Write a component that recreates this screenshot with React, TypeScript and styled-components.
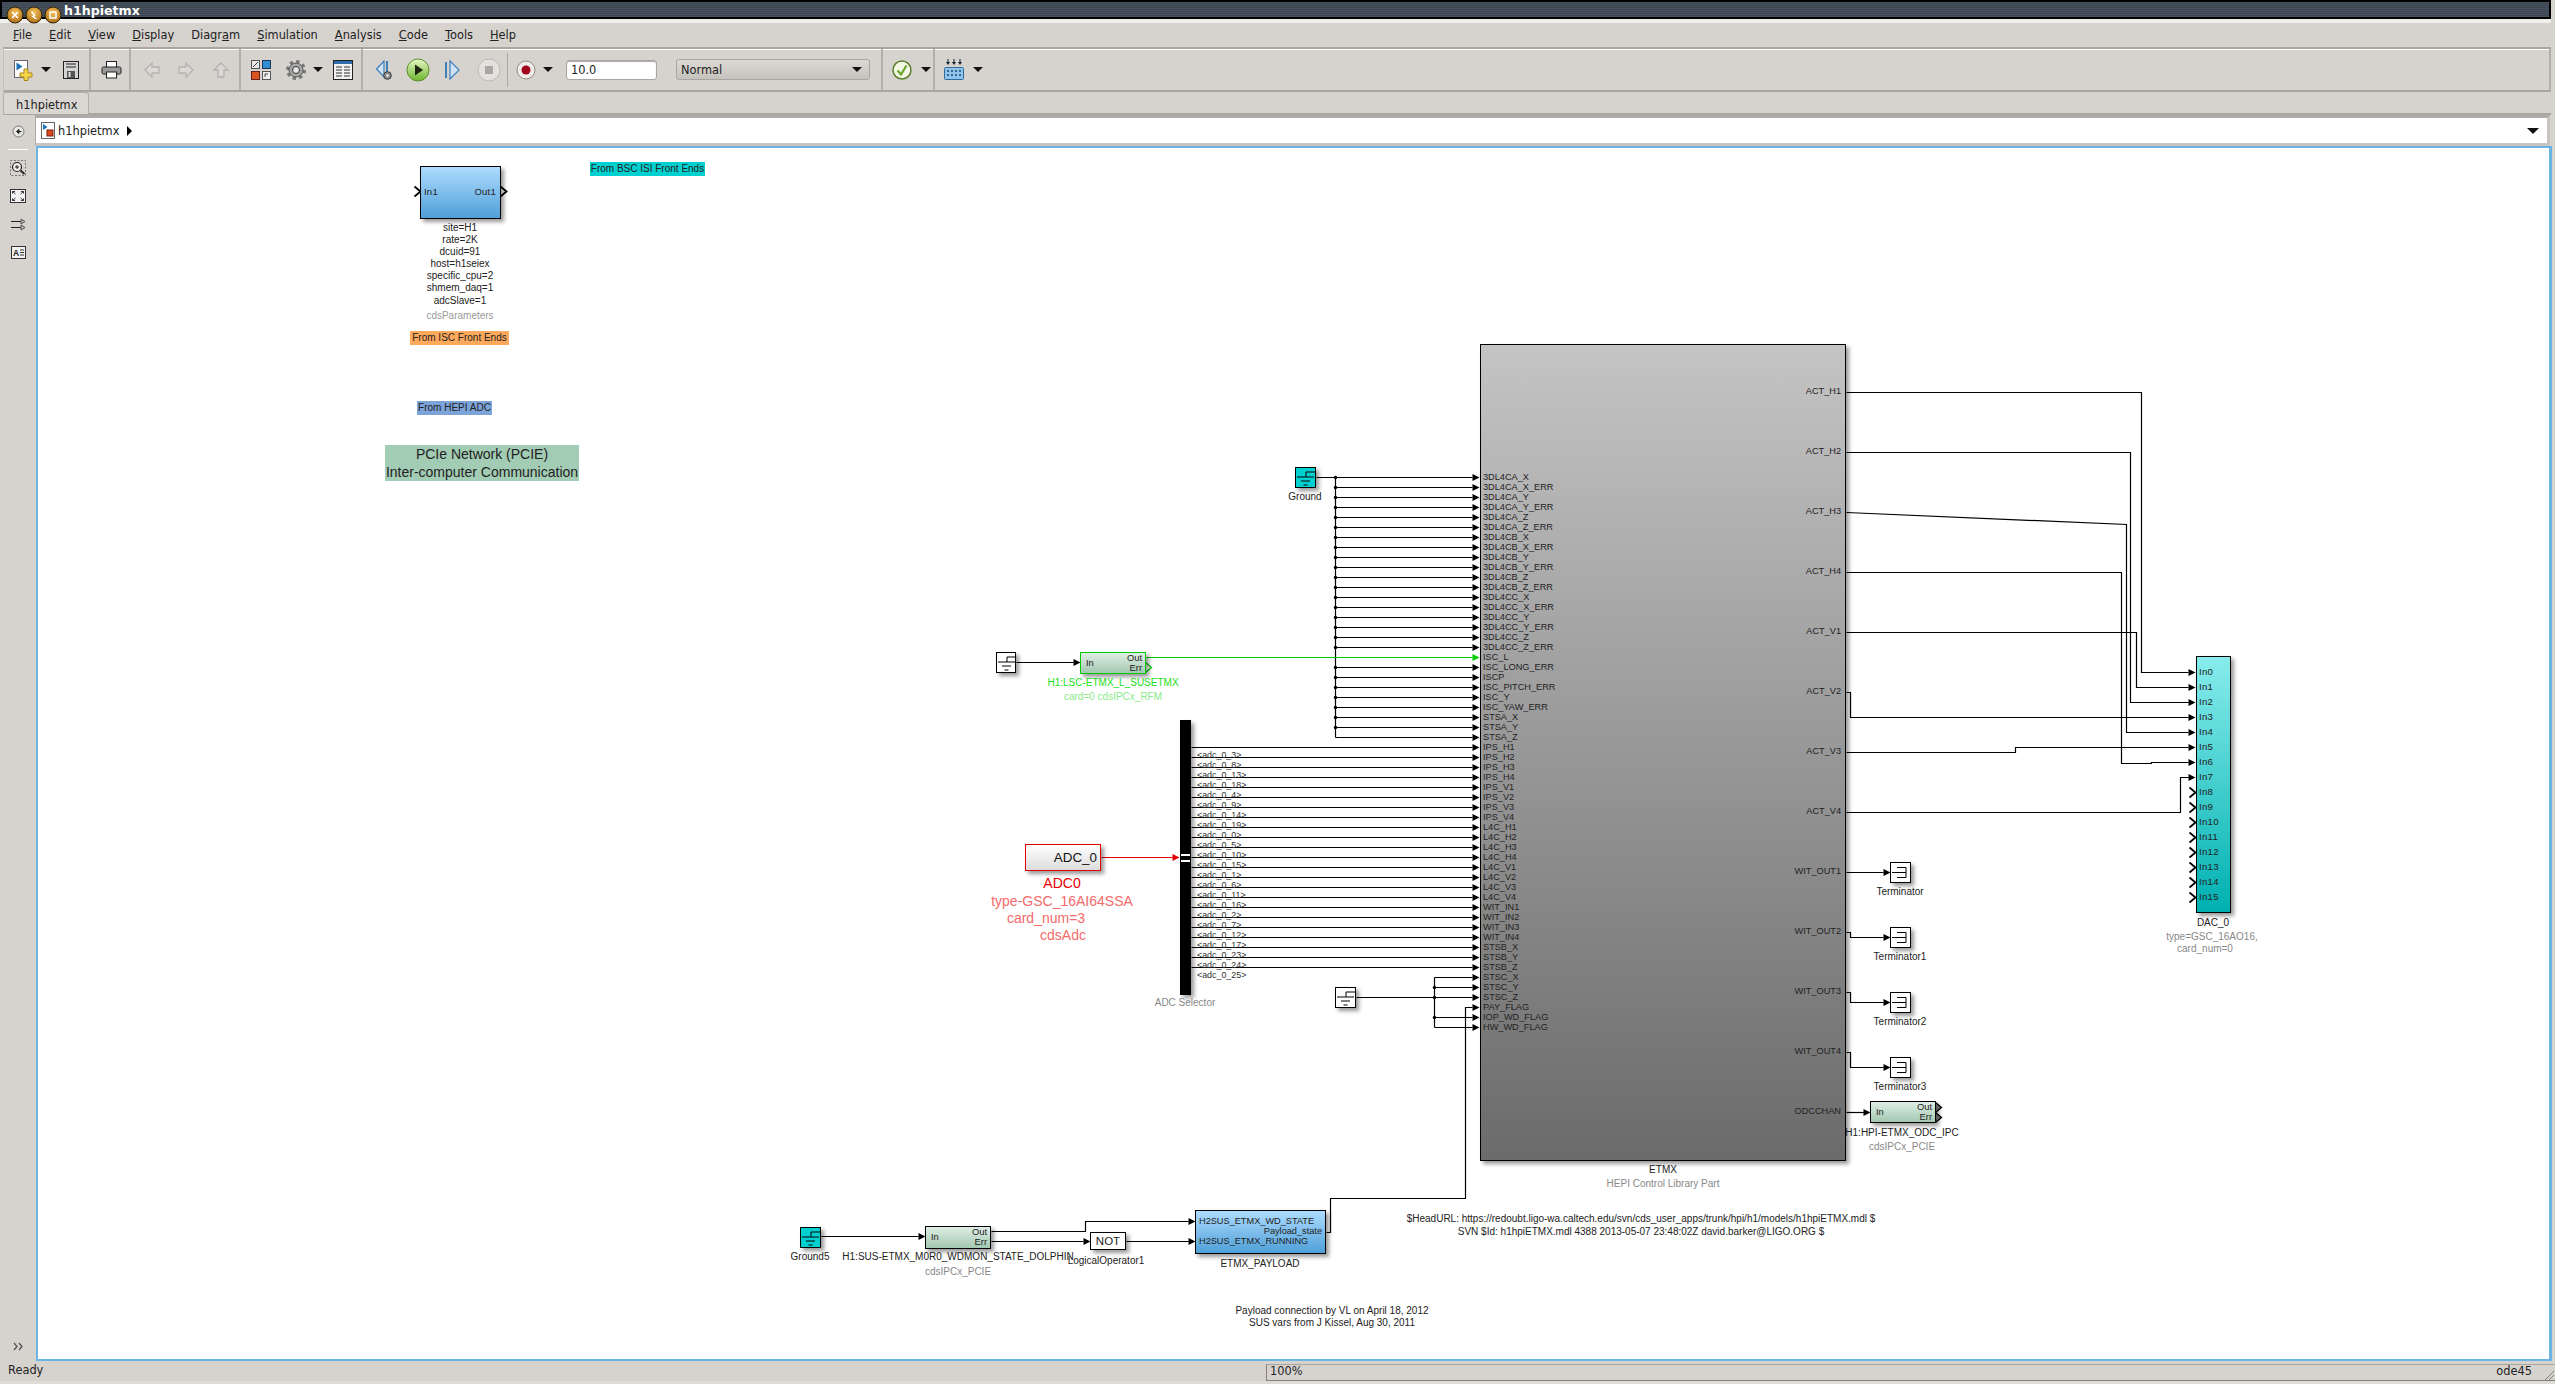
import React from "react";
import styled, { createGlobalStyle } from "styled-components";

const OX = 38;
const OY = 148;
const rowY = (i: number) => 477 + i * 10;

const Global = createGlobalStyle`
  html, body { margin: 0; padding: 0; background: #d6d3cf; }
  * { box-sizing: border-box; }
`;

const Shell = styled.div`
  width: 2555px;
  height: 1384px;
  overflow: hidden;
  display: flex;
  flex-direction: column;
  background: #d6d3cf;
  font-family: "DejaVu Sans", sans-serif;
  font-size: 11.4px;
  color: #222;
`;

/* window chrome */
const TitleBar = styled.div`
  position: relative;
  z-index: 1;
  height: 19px;
  margin-right: 4px;
  flex: none;
  display: flex;
  align-items: flex-start;
  gap: 1px;
  padding: 4px 0 0 4px;
  border: 2px solid #000;
  background: repeating-linear-gradient(#48525f 0 1px, #3c4652 1px 2px);
`;
const TitleText = styled.span`
  color: #fff;
  font-weight: 700;
  font-size: 12.6px;
  line-height: 14px;
  margin: -2px 0 0 1px;
`;
const Strip = styled.div`
  height: 4px;
  flex: none;
  margin-right: 4px;
  background: #efeeeb;
`;
const MenuBar = styled.nav`
  height: 24px;
  flex: none;
  display: flex;
  align-items: center;
  gap: 17px;
  padding-left: 13px;
`;
const Toolbar = styled.div`
  height: 45px;
  flex: none;
  margin: 0 4px 0 3px;
  display: flex;
  border-top: 2px solid #a9a6a2;
  border-bottom: 2px solid #a9a6a2;
  border-left: 1px solid #c4c1bd;
  box-shadow: inset 0 1px 0 #fff;
`;
const ToolGroup = styled.div<{ $w?: number }>`
  display: flex;
  align-items: center;
  width: ${p => (p.$w ? `${p.$w}px` : "auto")};
  flex: ${p => (p.$w ? "none" : "1")};
  border-right: 2px solid #b3b0ac;
`;
const Tool = styled.div<{ $w: number; $mr?: number }>`
  width: ${p => p.$w}px;
  margin-right: ${p => p.$mr || 0}px;
  flex: none;
  display: flex;
  align-items: center;
  justify-content: center;
`;
const Ico = styled.svg`
  display: block;
  flex: none;
`;
const Caret = styled.span`
  display: block;
  width: 0;
  height: 0;
  border-left: 5px solid transparent;
  border-right: 5px solid transparent;
  border-top: 5px solid #111;
`;
const ThinRule = styled.span`
  width: 1px;
  height: 34px;
  background: #a9a6a2;
`;
const TimeField = styled.div`
  width: 91px;
  height: 20px;
  margin-right: 19px;
  flex: none;
  padding-left: 4px;
  line-height: 19px;
  background: #fff;
  border: 1px solid #a9a6a2;
  border-radius: 3px;
  box-shadow: inset 0 1px 1px #aaa;
`;
const ModeSelect = styled.div`
  width: 194px;
  height: 21px;
  flex: none;
  display: flex;
  align-items: center;
  justify-content: space-between;
  padding: 0 7px 0 4px;
  background: linear-gradient(#dcd9d5, #c6c3bf);
  border: 1px solid #a9a6a2;
  border-radius: 3px;
`;
const TabStrip = styled.div`
  height: 23px;
  flex: none;
  margin: 0 4px 0 3px;
  border-bottom: 2px solid #a9a6a2;
`;
const Tab = styled.div`
  width: 86px;
  height: 22px;
  padding-left: 12px;
  line-height: 25px;
  background: #dad7d3;
  border: 1px solid #b3b0ac;
  border-bottom: 0;
  border-radius: 3px 3px 0 0;
`;
const Body = styled.div`
  height: 1246px;
  flex: none;
  display: flex;
`;
const Palette = styled.aside`
  width: 36px;
  flex: none;
  display: flex;
  flex-direction: column;
  align-items: center;
  padding: 6px 0 5px;
`;
const PaletteButton = styled.div<{ $auto?: boolean }>`
  height: 20px;
  width: 24px;
  margin-top: ${p => (p.$auto ? "auto" : "8px")};
  display: flex;
  align-items: center;
  justify-content: center;
  &:first-child { margin-top: 0; }
`;
const PaletteRule = styled.div`
  width: 20px;
  height: 1px;
  margin-top: 8px;
  background: #fff;
`;
const Main = styled.div`
  flex: 1;
  min-width: 0;
  display: flex;
  flex-direction: column;
  margin-right: 3px;
`;
const Address = styled.div`
  height: 31px;
  flex: none;
  display: flex;
  align-items: center;
  gap: 2px;
  margin-right: 2px;
  padding: 1px 8px 0 4px;
  background: #fff;
  border: 3px solid #c8c5c1;
  border-top-color: #aeaba7;
  border-left: 1px solid #aeaba7;
  margin-left: -1px;
`;
const CrumbArrow = styled.span`
  width: 0;
  height: 0;
  margin-left: 6px;
  border-top: 5px solid transparent;
  border-bottom: 5px solid transparent;
  border-left: 5px solid #000;
`;
const AddressCaret = styled(Caret)`
  margin-left: auto;
  border-left-width: 6px;
  border-right-width: 6px;
  border-top-width: 6px;
`;
const Canvas = styled.div`
  position: relative;
  flex: 1;
  background: #fff;
  border: 2px solid #6cb3e6;
  border-right-width: 3px;
  overflow: hidden;
  font-family: "Liberation Sans", Arial, sans-serif;
  font-size: 9.2px;
  line-height: 10px;
  color: #222;
`;
const StatusBar = styled.footer`
  height: 23px;
  flex: none;
  display: flex;
  padding-bottom: 3px;
  box-shadow: inset 0 -3px 0 #dfdcd8;
`;
const StatusText = styled.div`
  width: 1266px;
  flex: none;
  padding-left: 8px;
  line-height: 18px;
`;
const StatusBox = styled.div`
  flex: 1;
  display: flex;
  justify-content: space-between;
  margin-top: 3px;
  padding: 0 23px 0 3px;
  line-height: 13px;
  border-top: 1px solid #a9a6a2;
  border-bottom: 1px solid #85807c;
  border-left: 1px solid #85807c;
`;
const Grip = styled.svg`
  flex: none;
  align-self: flex-end;
  margin-left: -12px;
`;

/* diagram parts */
const Wires = styled.svg`
  position: absolute;
  left: 0;
  top: 0;
`;
const Block = styled.div<{ $x: number; $y: number; $w: number; $h: number }>`
  position: absolute;
  left: ${p => p.$x - OX}px;
  top: ${p => p.$y - OY}px;
  width: ${p => p.$w}px;
  height: ${p => p.$h}px;
  border: 1px solid #000;
  box-shadow: 3px 3px 4px rgba(0, 0, 0, 0.4);
`;
const Subsystem = styled(Block)`
  display: flex;
  justify-content: space-between;
  background: linear-gradient(#c4c4c4, #6b6b6b);
`;
const InputList = styled.div`
  padding: 127px 0 0 2px;
`;
const OutputList = styled.div`
  padding: 16px 4px 0 0;
  text-align: right;
`;
const OutputRow = styled.div`
  height: 60px;
  line-height: 60px;
`;
const InputRow = styled.div`
  height: 10px;
  white-space: nowrap;
`;
const BlueBlock = styled(Block)`
  display: flex;
  background: linear-gradient(#aedcff, #4f9fd8);
`;
const SplitLabels = styled.div`
  flex: 1;
  display: flex;
  align-items: center;
  justify-content: space-between;
  padding: 0 4px 2px 3px;
  font-size: 9.6px;
  letter-spacing: 0.2px;
`;
const PayloadLabels = styled.div`
  flex: 1;
  display: flex;
  flex-direction: column;
  padding: 5px 3px 0;
`;
const RightLabel = styled.span`
  align-self: flex-end;
`;
const IpcBlock = styled(Block)<{ $green?: boolean }>`
  display: flex;
  align-items: center;
  justify-content: space-between;
  padding: 0 3px 1px 5px;
  background: linear-gradient(#dfeee5, #a3c8b1);
  border-color: ${p => (p.$green ? "#00cc00" : "#000")};
  font-size: 9.4px;
`;
const OutStack = styled.div`
  display: flex;
  flex-direction: column;
  align-items: flex-end;
`;
const AdcBlock = styled(Block)`
  display: flex;
  align-items: center;
  justify-content: flex-end;
  padding-right: 3px;
  background: linear-gradient(#fff, #dcdcdc);
  border-color: #e00000;
  font-size: 13.4px;
  color: #111;
`;
const PlainBlock = styled(Block)`
  display: flex;
  align-items: center;
  justify-content: center;
  background: #fff;
  font-size: 11.5px;
`;
const SmallBlock = styled(Block)<{ $cyan?: boolean }>`
  background: ${p => (p.$cyan ? "#00d0d0" : "#fff")};
`;
const DacBlock = styled(Block)`
  padding: 7px 0 0 2px;
  background: linear-gradient(#88ecec, #00b0b0);
  font-size: 9.6px;
  letter-spacing: 0.3px;
`;
const DacRow = styled.div`
  height: 15px;
  line-height: 15px;
`;
const Bar = styled(Block)`
  background: #000;
  border: 0;
`;
const BarPort = styled.div`
  position: absolute;
  left: 1px;
  right: 1px;
  top: 134px;
  height: 8px;
  border-top: 2px solid #fff;
  border-bottom: 2px solid #fff;
`;
const Caption = styled.div<{ $x: number; $y: number; $c?: string; $s?: number }>`
  position: absolute;
  left: ${p => p.$x - OX}px;
  top: ${p => p.$y - OY}px;
  transform: translate(-50%, -50%);
  white-space: nowrap;
  color: ${p => p.$c || "#222"};
  font-size: ${p => p.$s || 10}px;
`;
const Stack = styled.div<{ $x: number; $y: number; $lh: number; $c?: string }>`
  position: absolute;
  left: ${p => p.$x - OX}px;
  top: ${p => p.$y - OY}px;
  transform: translateX(-50%);
  text-align: center;
  white-space: nowrap;
  font-size: 10px;
  line-height: ${p => p.$lh}px;
  color: ${p => p.$c || "#222"};
`;
const AdcNames = styled.div`
  position: absolute;
  left: ${1197 - OX}px;
  top: ${750 - OY}px;
  font-size: 8.9px;
  color: #333;
  white-space: nowrap;
`;
const Banner = styled.div<{ $x: number; $y: number; $w: number; $bg: string }>`
  position: absolute;
  left: ${p => p.$x - OX}px;
  top: ${p => p.$y - OY}px;
  width: ${p => p.$w}px;
  height: 14px;
  line-height: 14px;
  text-align: center;
  white-space: nowrap;
  background: ${p => p.$bg};
  font-size: 10px;
`;
const PcieNote = styled.div`
  position: absolute;
  left: ${385 - OX}px;
  top: ${445 - OY}px;
  width: 194px;
  height: 36px;
  line-height: 18px;
  text-align: center;
  white-space: nowrap;
  background: #a3ccb5;
  font-size: 14px;
  color: #222;
`;

/* title bar buttons */
const WinButton = ({ mark }: { mark: React.ReactNode }) => (
  <Ico width="18" height="18" viewBox="0 0 18 18">
    <defs>
      <radialGradient id="orb" cx="50%" cy="35%" r="70%">
        <stop offset="0" stopColor="#f7c25c" />
        <stop offset="1" stopColor="#a8670f" />
      </radialGradient>
    </defs>
    <circle cx="9" cy="9" r="8" fill="url(#orb)" stroke="#2d2208" />
    {mark}
  </Ico>
);

/* toolbar icons */
const NewIcon = () => (
  <Ico width="22" height="22" viewBox="0 0 22 22">
    <rect x="1.5" y="1.5" width="13" height="17" fill="#fff" stroke="#667" />
    <path d="M3.5 3.5l6 4-6 4z" fill="#1b6fb5" />
    <path d="M11 10h4v4h4v4h-4v3.500h-4v-3.500h-4v-4h4z" fill="#f6d54c" stroke="#a8851a" />
  </Ico>
);
const SaveIcon = () => (
  <Ico width="18" height="20" viewBox="0 0 18 20">
    <rect x="1.500" y="1.500" width="15" height="17" fill="#d5d5d5" stroke="#222" />
    <path d="M4 4h10M4 7h10" stroke="#222" />
    <rect x="5" y="11" width="8" height="7" fill="#555" />
    <rect x="6.500" y="12" width="2" height="5" fill="#ddd" />
  </Ico>
);
const PrintIcon = () => (
  <Ico width="21" height="18" viewBox="0 0 21 18">
    <rect x="5.500" y="0.500" width="10" height="7" fill="#fff" stroke="#222" />
    <rect x="1" y="6" width="19" height="7" rx="1.500" fill="#9a9a9a" stroke="#222" />
    <rect x="5.500" y="11" width="10" height="6" fill="#fff" stroke="#222" />
  </Ico>
);
const BackIcon = ({ rot = 0 }: { rot?: number }) => (
  <Ico width="18" height="18" viewBox="0 0 18 18">
    <path
      d="M2 9l7-7v4h7v6H9v4z"
      transform={`rotate(${rot} 9 9)`}
      fill="#dbd9d5"
      stroke="#b5b2ae"
      strokeWidth="1.300"
    />
  </Ico>
);
const LibraryIcon = () => (
  <Ico width="22" height="22" viewBox="0 0 22 22">
    <rect x="1.500" y="1.500" width="8" height="8" fill="#e6e6e6" stroke="#555" />
    <path d="M3 8l5-5" stroke="#444" />
    <rect x="12.500" y="1.500" width="8" height="8" fill="#2f8fd0" stroke="#235" />
    <rect x="1.500" y="12.500" width="8" height="8" fill="#d9541e" stroke="#622" />
    <rect x="12.500" y="12.500" width="8" height="8" fill="#eee" stroke="#555" />
    <path d="M15 18v-3h3" fill="none" stroke="#444" />
  </Ico>
);
const GearIcon = () => (
  <Ico width="22" height="22" viewBox="0 0 22 22">
    <circle cx="11" cy="11" r="8.500" fill="none" stroke="#777" strokeWidth="3" strokeDasharray="3.300 3.370" />
    <circle cx="11" cy="11" r="7" fill="#a8a8a8" stroke="#555" />
    <circle cx="11" cy="11" r="3.500" fill="#e6e6e6" stroke="#333" />
  </Ico>
);
const ConfigIcon = () => (
  <Ico width="20" height="20" viewBox="0 0 20 20">
    <rect x="0.500" y="0.500" width="19" height="19" fill="#f2f2f2" stroke="#222" />
    <rect x="1" y="1" width="18" height="3" fill="#2f6ea8" />
    <path d="M3 7h6M11 7h6M3 10h6M11 10h6M3 13h6M11 13h6M3 16h6M11 16h6" stroke="#333" />
  </Ico>
);
const StepBackIcon = () => (
  <Ico width="20" height="20" viewBox="0 0 20 20">
    <path d="M9 1v16L1.500 9z" fill="#cfe3f4" stroke="#3d7fb8" strokeWidth="1.200" />
    <path d="M12 1v11" stroke="#3d7fb8" strokeWidth="2" />
    <circle cx="12.500" cy="15.500" r="3.800" fill="#8f8f8f" stroke="#333" />
    <circle cx="12.500" cy="15.500" r="1.200" fill="#eee" />
  </Ico>
);
const PlayIcon = () => (
  <Ico width="24" height="24" viewBox="0 0 24 24">
    <defs>
      <linearGradient id="go" x1="0" y1="0" x2="0" y2="1">
        <stop offset="0" stopColor="#e8f7c8" />
        <stop offset="1" stopColor="#6db52c" />
      </linearGradient>
    </defs>
    <circle cx="12" cy="12" r="11" fill="url(#go)" stroke="#5c8f2c" />
    <path d="M9 6.500l8 5.500-8 5.500z" fill="#1c2410" />
  </Ico>
);
const StepForwardIcon = () => (
  <Ico width="18" height="22" viewBox="0 0 18 22">
    <path d="M2 3v16" stroke="#3d7fb8" strokeWidth="2" />
    <path d="M6 2v18l9-9z" fill="#cfe3f4" stroke="#3d7fb8" strokeWidth="1.200" />
  </Ico>
);
const StopIcon = () => (
  <Ico width="24" height="24" viewBox="0 0 24 24">
    <circle cx="12" cy="12" r="11" fill="#e4e2de" stroke="#bdbab6" />
    <rect x="8" y="8" width="8" height="8" fill="#aaa7a3" />
  </Ico>
);
const RecordIcon = () => (
  <Ico width="20" height="20" viewBox="0 0 20 20">
    <circle cx="10" cy="10" r="9" fill="#eeece9" stroke="#8f8c88" />
    <circle cx="10" cy="10" r="4.500" fill="#a0051c" />
  </Ico>
);
const CheckIcon = () => (
  <Ico width="20" height="20" viewBox="0 0 20 20">
    <circle cx="10" cy="10" r="9" fill="#f2f6e4" stroke="#5c7f2c" strokeWidth="1.500" />
    <path d="M5.500 10.500l3.500 4 5.500-9" fill="none" stroke="#6aa52a" strokeWidth="2.200" />
  </Ico>
);
const ScopeIcon = () => (
  <Ico width="22" height="22" viewBox="0 0 22 22">
    <path d="M5 0v4M11 0v4M17 0v4" stroke="#123" />
    <path d="M3 3h4l-2 3zM9 3h4l-2 3zM15 3h4l-2 3z" fill="#123" />
    <rect x="1.500" y="8.500" width="19" height="12" rx="1" fill="#8fc3ea" stroke="#2e6c9e" />
    <path d="M4 12h2M8 12h2M12 12h2M16 12h2M4 16h2M8 16h2M12 16h2M16 16h2" stroke="#1a4a70" strokeWidth="1.500" />
  </Ico>
);
const ModelCrumbIcon = () => (
  <Ico width="16" height="18" viewBox="0 0 16 18">
    <rect x="1.500" y="0.500" width="13" height="16" fill="#fff" stroke="#666" />
    <path d="M3 2l4.500 3L3 8z" fill="#1b6fb5" />
    <rect x="7" y="8" width="6" height="6" fill="#d9481e" stroke="#7a2208" />
  </Ico>
);

/* diagram glyph inside ground and terminator boxes */
const GroundGlyph = () => (
  <Ico width="19" height="19" viewBox="0 0 19 19">
    <path d="M19 4H10v5M1 9h17M5 13h9M7.500 17h4" fill="none" stroke="#000" />
  </Ico>
);
const TerminatorGlyph = () => (
  <Ico width="19" height="19" viewBox="0 0 19 19">
    <path d="M6 4.500h9v10H6M1 9.500h14" fill="none" stroke="#000" />
  </Ico>
);

const inputNames = [
  "3DL4CA_X", "3DL4CA_X_ERR", "3DL4CA_Y", "3DL4CA_Y_ERR", "3DL4CA_Z", "3DL4CA_Z_ERR",
  "3DL4CB_X", "3DL4CB_X_ERR", "3DL4CB_Y", "3DL4CB_Y_ERR", "3DL4CB_Z", "3DL4CB_Z_ERR",
  "3DL4CC_X", "3DL4CC_X_ERR", "3DL4CC_Y", "3DL4CC_Y_ERR", "3DL4CC_Z", "3DL4CC_Z_ERR",
  "ISC_L", "ISC_LONG_ERR", "ISCP", "ISC_PITCH_ERR", "ISC_Y", "ISC_YAW_ERR",
  "STSA_X", "STSA_Y", "STSA_Z",
  "IPS_H1", "IPS_H2", "IPS_H3", "IPS_H4", "IPS_V1", "IPS_V2", "IPS_V3", "IPS_V4",
  "L4C_H1", "L4C_H2", "L4C_H3", "L4C_H4", "L4C_V1", "L4C_V2", "L4C_V3", "L4C_V4",
  "WIT_IN1", "WIT_IN2", "WIT_IN3", "WIT_IN4",
  "STSB_X", "STSB_Y", "STSB_Z", "STSC_X", "STSC_Y", "STSC_Z",
  "PAY_FLAG", "IOP_WD_FLAG", "HW_WD_FLAG",
];
const outputNames = [
  "ACT_H1", "ACT_H2", "ACT_H3", "ACT_H4", "ACT_V1", "ACT_V2", "ACT_V3", "ACT_V4",
  "WIT_OUT1", "WIT_OUT2", "WIT_OUT3", "WIT_OUT4", "ODCCHAN",
];
const adcChannels = [3, 8, 13, 18, 4, 9, 14, 19, 0, 5, 10, 15, 1, 6, 11, 16, 2, 7, 12, 17, 23, 24, 25];
const dacY = (i: number) => 672 + i * 15;

const blackWires: string[] = [
  // ground fan-out
  "M1316 477H1335V737",
  ...inputNames.slice(0, 27).map((_, i) => (i === 18 ? "" : `M1335 ${rowY(i)}H1472`)),
  // adc selector
  ...adcChannels.map((_, i) => `M1191 ${rowY(27 + i)}H1472`),
  // stsc ground
  "M1356 997H1472",
  "M1434 977V1027",
  "M1434 977H1472",
  "M1434 987H1472",
  "M1434 1017H1472",
  "M1434 1027H1472",
  // payload flag
  "M1326 1232H1330V1198H1465V1007H1472",
  // ipc and misc
  "M1016 662H1073",
  "M821 1236H918",
  "M991 1231H1085V1221H1188",
  "M991 1241H1083",
  "M1126 1241H1188",
  // act outputs
  "M1846 392H2141V672H2188",
  "M1846 452H2130V702H2188",
  "M1846 512L2126 524V732H2188",
  "M1846 572H2121V763H2151V762H2188",
  "M1846 632H2136V687H2188",
  "M1846 692H1850V717H2188",
  "M1846 752H2015V747H2188",
  "M1846 812H2180V777H2188",
  // terminators
  "M1846 872H1883",
  "M1846 932H1850V937H1883",
  "M1846 992H1850V1002H1883",
  "M1846 1052H1850V1067H1883",
  "M1846 1112H1864",
];
const arrows: [number, number][] = [
  ...inputNames.map((_, i) => [1479, rowY(i)] as [number, number]).filter(a => a[1] !== rowY(18)),
  ...[0, 1, 2, 3, 4, 5, 6, 7].map(i => [2195, dacY(i)] as [number, number]),
  [1080, 662], [925, 1236], [1090, 1241], [1195, 1221], [1195, 1241],
  [1890, 872], [1890, 937], [1890, 1002], [1890, 1067], [1870, 1112],
];
const dots: [number, number][] = [
  ...inputNames.slice(0, 26).map((_, i) => [1335, rowY(i)] as [number, number]).filter(d => d[1] !== rowY(18)),
  [1434, 987], [1434, 997], [1434, 1017],
];
const arrowPath = (x: number, y: number) => `M${x - 7} ${y - 3.5}L${x} ${y}L${x - 7} ${y + 3.5}z`;
const chevron = (x: number, y: number) => `M${x - 6} ${y - 5}L${x} ${y}L${x - 6} ${y + 5}`;

const menuItems: [string, string, string][] = [
  ["", "F", "ile"], ["", "E", "dit"], ["", "V", "iew"], ["", "D", "isplay"], ["Diagr", "a", "m"],
  ["", "S", "imulation"], ["", "A", "nalysis"], ["", "C", "ode"], ["", "T", "ools"], ["", "H", "elp"],
];

export default function App() {
  return (
    <Shell>
      <Global />
      <TitleBar>
        <WinButton mark={<path d="M6 6l6 6M12 6l-6 6" stroke="#fff" strokeWidth="1.600" />} />
        <WinButton mark={<path d="M6.500 5.500l3 4-1.500 1 3.500 2.500" fill="none" stroke="#fff" strokeWidth="1.500" />} />
        <WinButton mark={<rect x="6" y="6" width="6" height="6" fill="none" stroke="#fff" strokeWidth="1.500" />} />
        <TitleText>h1hpietmx</TitleText>
      </TitleBar>
      <Strip />
      <MenuBar>
        {menuItems.map(([a, b, c]) => (
          <span key={a + b + c}>
            {a}
            <u>{b}</u>
            {c}
          </span>
        ))}
      </MenuBar>
      <Toolbar>
        <ToolGroup $w={87}>
          <Tool $w={9} />
          <Tool $w={22}><NewIcon /></Tool>
          <Tool $w={22}><Caret /></Tool>
          <Tool $w={28}><SaveIcon /></Tool>
        </ToolGroup>
        <ToolGroup $w={40}>
          <Tool $w={40}><PrintIcon /></Tool>
        </ToolGroup>
        <ToolGroup $w={110}>
          <Tool $w={4} />
          <Tool $w={34}><BackIcon /></Tool>
          <Tool $w={34}><BackIcon rot={180} /></Tool>
          <Tool $w={36}><BackIcon rot={90} /></Tool>
        </ToolGroup>
        <ToolGroup $w={122}>
          <Tool $w={40}><LibraryIcon /></Tool>
          <Tool $w={30}><GearIcon /></Tool>
          <Tool $w={14}><Caret /></Tool>
          <Tool $w={36}><ConfigIcon /></Tool>
        </ToolGroup>
        <ToolGroup $w={520}>
          <Tool $w={44}><StepBackIcon /></Tool>
          <Tool $w={22}><PlayIcon /></Tool>
          <Tool $w={48}><StepForwardIcon /></Tool>
          <Tool $w={24}><StopIcon /></Tool>
          <Tool $w={12}><ThinRule /></Tool>
          <Tool $w={26}><RecordIcon /></Tool>
          <Tool $w={18} $mr={9}><Caret /></Tool>
          <TimeField>10.0</TimeField>
          <ModeSelect>
            Normal
            <Caret />
          </ModeSelect>
        </ToolGroup>
        <ToolGroup $w={52}>
          <Tool $w={38}><CheckIcon /></Tool>
          <Tool $w={10}><Caret /></Tool>
        </ToolGroup>
        <ToolGroup>
          <Tool $w={38}><ScopeIcon /></Tool>
          <Tool $w={10}><Caret /></Tool>
        </ToolGroup>
      </Toolbar>
      <TabStrip>
        <Tab>h1hpietmx</Tab>
      </TabStrip>
      <Body>
        <Palette>
          <PaletteButton>
            <Ico width="13" height="13" viewBox="0 0 13 13">
              <circle cx="6.500" cy="6.500" r="5.500" fill="#e8e6e2" stroke="#777" />
              <path d="M9.500 6.500h-4M7 4.500l-2.500 2 2.500 2z" stroke="#222" fill="#222" />
            </Ico>
          </PaletteButton>
          <PaletteRule />
          <PaletteButton>
            <Ico width="16" height="16" viewBox="0 0 16 16">
              <rect x="0.500" y="0.500" width="15" height="15" fill="none" stroke="#777" strokeDasharray="2 1.500" />
              <circle cx="7" cy="7" r="4.500" fill="#eee" stroke="#222" strokeWidth="1.200" />
              <path d="M5 7h4M7 5v4" stroke="#222" />
              <path d="M10.500 10.500l4 3.500" stroke="#222" strokeWidth="1.800" />
            </Ico>
          </PaletteButton>
          <PaletteButton>
            <Ico width="16" height="14" viewBox="0 0 16 14">
              <rect x="0.500" y="0.500" width="15" height="13" fill="#f2f2f2" stroke="#333" />
              <path d="M2.500 2.500l3 2.500M2.500 2.500h2.500M2.500 2.500v2M13.500 2.500l-3 2.500M13.500 2.500H11M13.500 2.500v2M2.500 11.500l3-2.500M2.500 11.500h2.500M2.500 11.500v-2M13.500 11.500l-3-2.500M13.500 11.500H11M13.500 11.500v-2" fill="none" stroke="#333" />
            </Ico>
          </PaletteButton>
          <PaletteButton>
            <Ico width="15" height="13" viewBox="0 0 15 13">
              <path d="M0 3.500h10M0 9.500h10" stroke="#222" />
              <path d="M10 1l4 2.500-4 2.500zM10 7l4 2.500-4 2.500z" fill="#bbb" stroke="#555" />
            </Ico>
          </PaletteButton>
          <PaletteButton>
            <Ico width="15" height="13" viewBox="0 0 15 13">
              <rect x="0.500" y="0.500" width="14" height="12" fill="#f2f2f2" stroke="#333" />
              <text x="2" y="10" fontFamily="Liberation Sans" fontWeight="700" fontSize="8.500" fill="#222">A</text>
              <path d="M9 4h4M9 6.500h4M9 9h4" stroke="#333" />
            </Ico>
          </PaletteButton>
          <PaletteButton $auto>
            <Ico width="11" height="9" viewBox="0 0 11 9">
              <path d="M1 1l3 3.500L1 8M6 1l3 3.500L6 8" fill="none" stroke="#555" strokeWidth="1.300" />
            </Ico>
          </PaletteButton>
        </Palette>
        <Main>
          <Address>
            <ModelCrumbIcon />
            h1hpietmx
            <CrumbArrow />
            <AddressCaret />
          </Address>
          <Canvas>
            <Wires width="2512" height="1211" viewBox={`${OX} ${OY} 2512 1211`}>
              <g transform="translate(.5 .5)" fill="none" stroke="#000" strokeWidth="1.200">
                {blackWires.filter(Boolean).map((d, i) => <path key={i} d={d} />)}
                <path d="M1146 657H1472" stroke="#00c800" />
                <path d="M1101 857H1172" stroke="#e00000" />
                <path d={chevron(420, 191)} strokeWidth="1.800" />
                <path d={chevron(506, 191)} strokeWidth="1.800" />
                {[8, 9, 10, 11, 12, 13, 14, 15].map(i => (
                  <path key={i} d={chevron(2195, dacY(i))} strokeWidth="1.800" />
                ))}
                <path d={chevron(1941, 1107)} fill="#888" strokeWidth="1.300" />
                <path d={chevron(1941, 1117)} fill="#888" strokeWidth="1.300" />
                <path d={chevron(1151, 667)} stroke="#00c800" strokeWidth="1.300" />
                <g stroke="none" fill="#000">
                  {arrows.map(([x, y]) => <path key={`${x}-${y}`} d={arrowPath(x, y)} />)}
                  {dots.map(([x, y]) => <circle key={`${x}-${y}`} cx={x} cy={y} r="1.700" />)}
                  <path d={arrowPath(1479, 657)} fill="#00d000" />
                  <path d={arrowPath(1179, 857)} fill="#e00000" />
                </g>
              </g>
            </Wires>

            <BlueBlock $x={420} $y={166} $w={81} $h={53}>
              <SplitLabels>
                <span>In1</span>
                <span>Out1</span>
              </SplitLabels>
            </BlueBlock>
            <Stack $x={460} $y={222} $lh={12.1}>
              <div>site=H1</div>
              <div>rate=2K</div>
              <div>dcuid=91</div>
              <div>host=h1seiex</div>
              <div>specific_cpu=2</div>
              <div>shmem_daq=1</div>
              <div>adcSlave=1</div>
            </Stack>
            <Caption $x={460} $y={316} $c="#999">cdsParameters</Caption>
            <Banner $x={590} $y={162} $w={115} $bg="#00d0d0">From BSC ISI Front Ends</Banner>
            <Banner $x={410} $y={331} $w={99} $bg="#ffa95c">From ISC Front Ends</Banner>
            <Banner $x={417} $y={401} $w={75} $bg="#7ca4d9">From HEPI ADC</Banner>
            <PcieNote>
              PCIe Network (PCIE)
              <br />
              Inter-computer Communication
            </PcieNote>

            <SmallBlock $cyan $x={1295} $y={467} $w={21} $h={21}><GroundGlyph /></SmallBlock>
            <Caption $x={1305} $y={497}>Ground</Caption>

            <SmallBlock $x={996} $y={652} $w={20} $h={21}><GroundGlyph /></SmallBlock>
            <IpcBlock $green $x={1080} $y={652} $w={66} $h={22}>
              <span>In</span>
              <OutStack>
                <span>Out</span>
                <span>Err</span>
              </OutStack>
            </IpcBlock>
            <Caption $x={1113} $y={683} $c="#19e019">H1:LSC-ETMX_L_SUSETMX</Caption>
            <Caption $x={1113} $y={697} $c="#8aea8a">card=0 cdsIPCx_RFM</Caption>

            <AdcBlock $x={1025} $y={844} $w={76} $h={27}>ADC_0</AdcBlock>
            <Caption $x={1062} $y={883} $s={14} $c="#e60000">ADC0</Caption>
            <Caption $x={1062} $y={901} $s={14} $c="#f46a6a">type-GSC_16AI64SSA</Caption>
            <Caption $x={1046} $y={918} $s={14} $c="#f46a6a">card_num=3</Caption>
            <Caption $x={1063} $y={935} $s={14} $c="#f46a6a">cdsAdc</Caption>

            <Bar $x={1180} $y={720} $w={11} $h={275}><BarPort /></Bar>
            <AdcNames>
              {adcChannels.map(n => <InputRow key={n}>{`<adc_0_${n}>`}</InputRow>)}
            </AdcNames>
            <Caption $x={1185} $y={1003} $c="#888">ADC Selector</Caption>

            <SmallBlock $x={1335} $y={987} $w={21} $h={21}><GroundGlyph /></SmallBlock>

            <Subsystem $x={1480} $y={344} $w={366} $h={817}>
              <InputList>
                {inputNames.map(n => <InputRow key={n}>{n}</InputRow>)}
              </InputList>
              <OutputList>
                {outputNames.map(n => <OutputRow key={n}>{n}</OutputRow>)}
              </OutputList>
            </Subsystem>
            <Caption $x={1663} $y={1170}>ETMX</Caption>
            <Caption $x={1663} $y={1184} $c="#888">HEPI Control Library Part</Caption>

            {[862, 927, 992, 1057].map(y => (
              <SmallBlock key={y} $x={1890} $y={y} $w={21} $h={21}><TerminatorGlyph /></SmallBlock>
            ))}
            <Caption $x={1900} $y={892}>Terminator</Caption>
            <Caption $x={1900} $y={957}>Terminator1</Caption>
            <Caption $x={1900} $y={1022}>Terminator2</Caption>
            <Caption $x={1900} $y={1087}>Terminator3</Caption>

            <IpcBlock $x={1870} $y={1101} $w={66} $h={22}>
              <span>In</span>
              <OutStack>
                <span>Out</span>
                <span>Err</span>
              </OutStack>
            </IpcBlock>
            <Caption $x={1902} $y={1133}>H1:HPI-ETMX_ODC_IPC</Caption>
            <Caption $x={1902} $y={1147} $c="#888">cdsIPCx_PCIE</Caption>

            <DacBlock $x={2196} $y={656} $w={35} $h={257}>
              {Array.from({ length: 16 }, (_, i) => <DacRow key={i}>{`In${i}`}</DacRow>)}
            </DacBlock>
            <Caption $x={2213} $y={923}>DAC_0</Caption>
            <Caption $x={2212} $y={937} $c="#888">type=GSC_16AO16,</Caption>
            <Caption $x={2205} $y={949} $c="#888">card_num=0</Caption>

            <SmallBlock $cyan $x={800} $y={1227} $w={21} $h={21}><GroundGlyph /></SmallBlock>
            <Caption $x={810} $y={1257}>Ground5</Caption>
            <IpcBlock $x={925} $y={1226} $w={66} $h={23}>
              <span>In</span>
              <OutStack>
                <span>Out</span>
                <span>Err</span>
              </OutStack>
            </IpcBlock>
            <Caption $x={958} $y={1257}>H1:SUS-ETMX_M0R0_WDMON_STATE_DOLPHIN</Caption>
            <Caption $x={958} $y={1272} $c="#888">cdsIPCx_PCIE</Caption>
            <PlainBlock $x={1090} $y={1232} $w={36} $h={18}>NOT</PlainBlock>
            <Caption $x={1106} $y={1261}>LogicalOperator1</Caption>
            <BlueBlock $x={1195} $y={1210} $w={131} $h={44}>
              <PayloadLabels>
                <span>H2SUS_ETMX_WD_STATE</span>
                <RightLabel>Payload_state</RightLabel>
                <span>H2SUS_ETMX_RUNNING</span>
              </PayloadLabels>
            </BlueBlock>
            <Caption $x={1260} $y={1264}>ETMX_PAYLOAD</Caption>

            <Stack $x={1641} $y={1213} $lh={12.6}>
              <div>$HeadURL: https://redoubt.ligo-wa.caltech.edu/svn/cds_user_apps/trunk/hpi/h1/models/h1hpiETMX.mdl $</div>
              <div>SVN $Id: h1hpiETMX.mdl 4388 2013-05-07 23:48:02Z david.barker@LIGO.ORG $</div>
            </Stack>
            <Stack $x={1332} $y={1305} $lh={12}>
              <div>Payload connection by VL on April 18, 2012</div>
              <div>SUS vars from J Kissel, Aug 30, 2011</div>
            </Stack>
          </Canvas>
        </Main>
      </Body>
      <StatusBar>
        <StatusText>Ready</StatusText>
        <StatusBox>
          <span>100%</span>
          <span>ode45</span>
        </StatusBox>
        <Grip width="12" height="12" viewBox="0 0 12 12">
          <path d="M11 2L2 11M11 6l-5 5" stroke="#85807c" />
        </Grip>
      </StatusBar>
    </Shell>
  );
}
